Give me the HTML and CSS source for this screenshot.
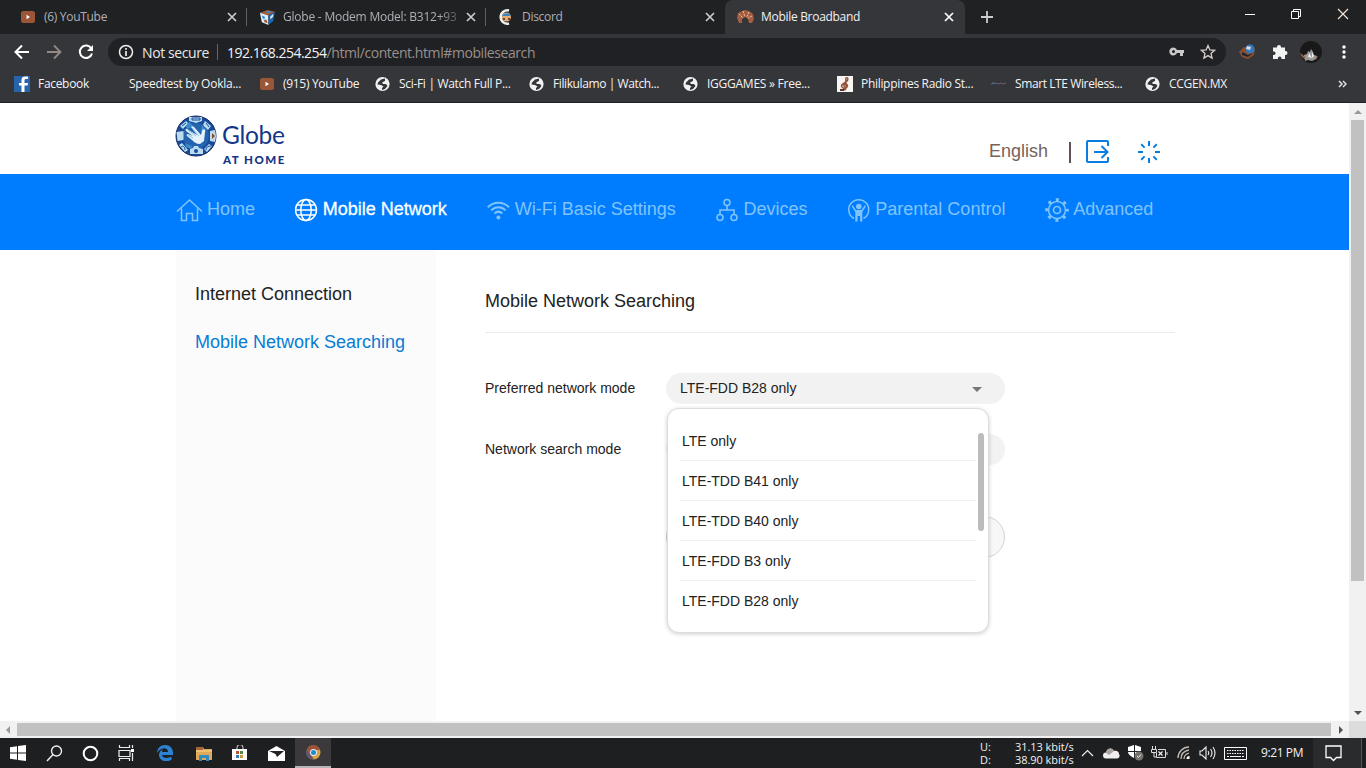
FILE: index.html
```html
<!DOCTYPE html>
<html lang="en">
<head>
    <meta charset="UTF-8">
    <meta name="viewport" content="width=device-width, initial-scale=1.0">
    <title>Mobile Broadband</title>
    <link rel="stylesheet" href="styles.css">
</head>
<body>
    <svg class="sprite" width="0" height="0">
        <symbol id="youtube" viewBox="0 0 16 16"><rect x="1" y="2" width="14" height="12" rx="2.500" fill="#9b5637"/><path d="M6.500 5.800v4.400L10 8z" fill="#fff"/></symbol>
        <symbol id="world" viewBox="0 0 16 16"><circle cx="7.500" cy="8" r="7.100" fill="#f1f1f1"/><path d="M10 2.500L6 3.500 3 6.500 2.500 8.500 6 9 8.500 10.500 7 12v2l3-1 2.500-3L11 8H8L7 6.500l3-1.500z" fill="#35363a"/><path d="M8.500 6.500L13 5.500" stroke="#f1f1f1"/></symbol>
        <symbol id="close" viewBox="0 0 10 10"><path d="M1 1l8 8M9 1L1 9" stroke="currentColor" stroke-width="1.700"/></symbol>
    </svg>
    <div class="tabs">
        <div class="tab">
            <svg width="16" height="16"><use href="#youtube"/></svg>
            <span class="tab-title">(6) YouTube</span>
            <svg class="x" width="10" height="10"><use href="#close"/></svg>
        </div>
        <div class="tab">
            <svg width="17" height="17" viewBox="0 0 18 18"><path d="M1 4l8-3 8 2-7 4z" fill="#a85b32"/><path d="M1 4l9 3v10l-7-3z" fill="#e1edf5"/><path d="M17 3l-7 4v10l5-4z" fill="#1c63b2"/><path d="M3 7l3 1v3l-2-1zM7 3l4-1 2 1-4 2z" fill="#318bd4"/><path d="M5 12l3-1 1 4-3-1z" fill="#a85b32"/><path d="M12 8l3-3v3l-3 3z" fill="#dceaf4"/></svg>
            <span class="tab-title fade">Globe - Modem Model: B312+93</span>
            <svg class="x" width="10" height="10"><use href="#close"/></svg>
        </div>
        <div class="tab">
            <svg width="16" height="16" viewBox="0 0 16 16"><path d="M11 1.500A6.700 6.700 0 1 0 11 14.500" fill="none" stroke="#eee" stroke-width="2.500"/><circle cx="8.500" cy="8" r="4.500" fill="#e5ae76"/><path d="M4 7a5 5 0 0 1 9 0z" fill="#3488c5"/><path d="M5 9h2v2H5zm5 0h2v2h-2z" fill="#754326"/></svg>
            <span class="tab-title">Discord</span>
            <svg class="x" width="10" height="10"><use href="#close"/></svg>
        </div>
        <div class="tab active">
            <svg width="17" height="16" viewBox="0 0 17 16"><path d="M5 14H2L0 9l1-5 4-2 3-1 4 1 4 3 1 5-2 4h-3l-1-4-3-2-3 2z" fill="#a65d40"/><path d="M2 5l4 4M6 2l2 6M12 3l-2 5M15 7l-4 2" stroke="#e7c3ad" stroke-width="1" stroke-dasharray="2 1"/></svg>
            <span class="tab-title">Mobile Broadband</span>
            <svg class="x" width="10" height="10"><use href="#close"/></svg>
        </div>
        <svg class="plus" width="12" height="12" viewBox="0 0 12 12"><path d="M6 0v12M0 6h12" stroke="#ccc" stroke-width="1.800"/></svg>
        <div class="window-buttons">
            <svg width="10" height="12"><path d="M0 6.500h10" stroke="#fff"/></svg>
            <svg width="12" height="12"><path d="M1.500 3.500h7v7h-7zM3.500 3V1.500h7v7H9" fill="none" stroke="#fff"/></svg>
            <svg width="12" height="12"><path d="M1 1l10 10M11 1L1 11" stroke="#f4e3d5" stroke-width="1.200"/></svg>
        </div>
    </div>
    <div class="toolbar">
        <svg width="16" height="16" viewBox="0 0 16 16"><path d="M15 8H2M8 1.500L1.500 8 8 14.500" fill="none" stroke="#fff" stroke-width="2"/></svg>
        <svg width="16" height="16" viewBox="0 0 16 16"><path d="M1 8h13M8 1.500L14.500 8 8 14.500" fill="none" stroke="#938a86" stroke-width="1.800"/></svg>
        <svg width="16" height="16" viewBox="0 0 16 16"><path d="M13.300 4.500A6.200 6.200 0 1 0 14 9.500" fill="none" stroke="#fff" stroke-width="2"/><path d="M15 1v6H9z" fill="#fff"/></svg>
        <div class="address">
            <svg width="16" height="16" viewBox="0 0 16 16"><circle cx="8" cy="8" r="6.500" fill="none" stroke="#eee" stroke-width="1.500"/><path d="M8 7v5M8 4v1.700" stroke="#eee" stroke-width="1.700"/></svg>
            <span class="secure">Not secure</span>
            <span class="bar"></span>
            <span class="url"><b>192.168.254.254</b>/html/content.html#mobilesearch</span>
            <svg class="key" width="15" height="10" viewBox="0 0 15 10"><path d="M8 3h7v3h-1v3h-3V6H8A4 4 0 1 1 8 3z" fill="#c9c9c9"/><circle cx="4.500" cy="4.500" r="1.500" fill="#202124"/></svg>
            <svg class="star" width="16" height="16" viewBox="0 0 16 16"><path d="M8 1.500l1.900 4.400 4.700.4-3.600 3.100 1.100 4.700L8 11.600l-4.100 2.500L5 9.400 1.400 6.300l4.700-.4z" fill="none" stroke="#d9cec6" stroke-width="1.300"/></svg>
        </div>
        <svg class="extension" width="17" height="16" viewBox="0 0 17 16"><path d="M0 8l5-5 11 2-1 6-6 4-6-2z" fill="#885030"/><circle cx="11" cy="5" r="4.500" fill="#3279bd"/><path d="M8 2l4 1-1 3-4-1z" fill="#d6dce0"/><path d="M3 8l6 3 5-2-5 4-6-2z" fill="#20242d"/></svg>
        <svg class="puzzle" width="16" height="16" viewBox="0 0 16 16"><path d="M1 3.500h4V3a2 2 0 0 1 4 0v.5h4V7h.5a2 2 0 0 1 0 4H13v4H9.500v-.7a1.800 1.800 0 0 0-3.600 0v.7H1v-4h.8a1.800 1.800 0 0 0 0-3.600H1z" fill="#f4f4f4"/></svg>
        <svg class="avatar" width="24" height="24" viewBox="0 0 24 24"><circle cx="12" cy="12" r="11" fill="#181818"/><path d="M5 15l3-1 1-3 2 1 1-3 2 3 1 3 3 1-1 3-4 2-4-1-3 1z" fill="#999"/><path d="M1 13l3 2 3 5-4-3zM16 18l3-2-2 4z" fill="#aa663e"/><path d="M10 13l3 5-4-1zM13 12l2 4-2 2z" fill="#eee"/></svg>
        <svg width="4" height="14"><circle cx="2" cy="2" r="1.700" fill="#fff"/><circle cx="2" cy="7" r="1.700" fill="#fff"/><circle cx="2" cy="12" r="1.700" fill="#fff"/></svg>
    </div>
    <div class="bookmarks">
        <div><svg width="16" height="16"><path fill="#2864ae" d="M0 0h16v16H0z"/><path d="M14 3h-2c-1 0-1.500.5-1.500 1.500V7H14l-.4 2.500h-3.100V16H7.500V9.500H5V7h2.500V4C7.500 1.500 9 .5 11 .5h3z" fill="#fff"/></svg><span>Facebook</span></div>
        <div><i class="no-icon"></i><span class="ookla">Speedtest by Ookla...</span></div>
        <div><svg width="16" height="16"><use href="#youtube"/></svg><span>(915) YouTube</span></div>
        <div><svg width="16" height="16"><use href="#world"/></svg><span>Sci-Fi | Watch Full P...</span></div>
        <div><svg width="16" height="16"><use href="#world"/></svg><span class="tight">Filikulamo | Watch...</span></div>
        <div><svg width="16" height="16"><use href="#world"/></svg><span class="ookla">IGGGAMES » Free...</span></div>
        <div><svg width="16" height="16"><path fill="#f7f5f3" d="M0 0h16v16H0z"/><path d="M7 14c4 0 1-9 2-12 2-1 3 2 0 4C5 8 3 10 6 12c4 1 6-3 3-4-2 0-3 2-1 3" fill="none" stroke="#93533b" stroke-width="1.500"/><path d="M3 13h4v2H3z" fill="#593628"/></svg><span>Philippines Radio St...</span></div>
        <div><svg width="16" height="16"><path d="M0 8l2-1 1 1 2-1 2 1 3-1 2 1 3-1" fill="none" stroke="#69636b"/><path d="M1 7h3" stroke="#437298"/></svg><span class="tight">Smart LTE Wireless...</span></div>
        <div><svg width="16" height="16"><use href="#world"/></svg><span>CCGEN.MX</span></div>
        <svg class="more" width="9" height="8"><path d="M1 1l3 3-3 3M5 1l3 3-3 3" fill="none" stroke="#ddd" stroke-width="1.500"/></svg>
    </div>

    <div class="view">
        <div class="page">
            <div class="header">
                <div class="logo">
                    <svg width="42" height="42" viewBox="0 0 42 42">
                        <circle cx="21" cy="21" r="20" fill="#184b9c" stroke="#172c62"/>
                        <circle cx="21" cy="21" r="13" fill="#2463ae"/>
                        <path d="M9 10l6-3 3 4-5 3zM27 10l4 5-2 7-3-6zM10 28l7 3-1 3-5-2z" fill="#3e8bcb"/>
                        <path d="M14 2h13v4l-6 2-7-2zM1.500 17l7-1v9l-6 1zM35 16l5-1 1 6-1 6-5-1zM15 34l3-1 1-2h4l1 2 4 1v5H15zM5 11l6-5 2 2-5 6zM30 6l6 5-3 4-5-5zM4 30l3-2 6 7-3 2zM29 34l5-5 3 2-5 6z" fill="#b9ddee"/>
                        <path d="M17 3h8v2h-8zM7 11l4-3M31 8l3 4M6 32c2-2 4 0 4 3M31 35c0-3 2-4 5-4" fill="none" stroke="#184b9c"/>
                        <circle cx="21" cy="36" r="2" fill="#1b4e9c"/><path d="M37 18v6l3-3z" fill="#8d452c"/>
                        <path d="M12 14l10 6-6-8c1-1 2-1 3 0l7 8 1-4c1-3 4-2 3 1l-1 9-4 3c-4 0-6-2-8-4l-5-4c-1-1 0-2 1-2l5 2-7-5c-1-1 0-3 1-2z" fill="#e3f3fb"/>
                        <path d="M13 15l8 6M17 13l7 8M13 20l5 3" stroke="#66acd8" stroke-width=".7"/>
                    </svg>
                    <div class="brand">
                        <div class="brand-name">Globe</div>
                        <div class="brand-sub">AT HOME</div>
                    </div>
                </div>
                <div class="tools">
                    <span class="language">English</span>
                    <span class="divider"></span>
                    <svg width="24" height="24" viewBox="0 0 24 24"><path d="M23 6V2q0-1-1-1H3q-1 0-1 1v19q0 1 1 1h19q1 0 1-1v-4M9 12h13M16.500 6l6 6-6 6" fill="none" stroke="#087cdf" stroke-width="2"/></svg>
                    <svg class="loading" width="24" height="24" viewBox="0 0 24 24"><path d="M12 1v5M12 18v5M1 12h5M18 12h5M4.200 4.200l3.400 3.400M16.400 16.400l3.400 3.400M4.200 19.800l3.400-3.400M16.400 7.600l3.400-3.400" stroke="#087cdf" stroke-width="2"/></svg>
                </div>
            </div>
            <div class="nav">
                <div class="nav-item">
                    <svg width="26" height="24" viewBox="0 0 26 24"><path d="M1 13.500L13.500 2 26 13.500M5.500 10.500v12h5v-7h6v7h5v-12" fill="none" stroke="currentColor" stroke-width="1.500"/></svg>
                    <span>Home</span>
                </div>
                <div class="nav-item selected">
                    <svg width="24" height="24" viewBox="0 0 24 24"><g fill="none" stroke="currentColor" stroke-width="1.500"><circle cx="11" cy="12" r="10.500"/><ellipse cx="11" cy="12" rx="5.200" ry="10.500"/><path d="M2 7h18M2 17h18M.500 12h21"/></g></svg>
                    <span>Mobile Network</span>
                </div>
                <div class="nav-item">
                    <svg width="24" height="24" viewBox="0 0 24 24"><path d="M.8 9.200c6-6 15.200-6 21.200 0M4.200 12.400c4.200-4.200 10.200-4.200 14.400 0M7.500 15.500c2.400-2.300 5.400-2.300 7.800 0" fill="none" stroke="currentColor" stroke-width="2"/><circle cx="11.400" cy="19.500" r="2" fill="currentColor"/></svg>
                    <span>Wi-Fi Basic Settings</span>
                </div>
                <div class="nav-item">
                    <svg width="24" height="24" viewBox="0 0 24 24"><g fill="none" stroke="currentColor" stroke-width="1.600"><circle cx="11" cy="4.500" r="3"/><circle cx="4" cy="19.500" r="3"/><circle cx="18" cy="19.500" r="3"/><path d="M11 7.500V12M4 16.500V12h14v4.500"/></g></svg>
                    <span>Devices</span>
                </div>
                <div class="nav-item">
                    <svg width="24" height="24" viewBox="0 0 24 24"><path d="M7 20.500A10 10 0 1 1 16.500 20.500" fill="none" stroke="currentColor" stroke-width="1.500"/><circle cx="11.800" cy="8.500" r="2.800" fill="currentColor"/><path d="M5.500 7L9 12h5.500L18 7l.8 1.500-3.500 5.500v9.500h-2.200V18h-2.600v5.500H8.300V14L4.800 8.500z" fill="currentColor"/></svg>
                    <span>Parental Control</span>
                </div>
                <div class="nav-item">
                    <svg width="24" height="24" viewBox="0 0 24 24"><g fill="none" stroke="currentColor"><circle cx="12" cy="12" r="10.300" stroke-width="3" stroke-dasharray="3 5.090" stroke-dashoffset="1.500"/><circle cx="12" cy="12" r="8.500" stroke-width="1.500"/><circle cx="12" cy="12" r="3.500" stroke-width="1.700"/></g></svg>
                    <span>Advanced</span>
                </div>
            </div>
            <div class="content">
                <div class="sidebar">
                    <div>Internet Connection</div>
                    <div class="current">Mobile Network Searching</div>
                </div>
                <div class="main">
                    <div class="page-title">Mobile Network Searching</div>
                    <div class="row">
                        <label>Preferred network mode</label>
                        <div class="select">
                            <span>LTE-FDD B28 only</span>
                            <i class="arrow"></i>
                            <div class="dropdown">
                                <div class="options">
                                    <div>LTE only</div>
                                    <div>LTE-TDD B41 only</div>
                                    <div>LTE-TDD B40 only</div>
                                    <div>LTE-FDD B3 only</div>
                                    <div>LTE-FDD B28 only</div>
                                </div>
                                <div class="thumb"></div>
                            </div>
                        </div>
                    </div>
                    <div class="row">
                        <label>Network search mode</label>
                        <div class="select"></div>
                    </div>
                    <div class="button"></div>
                </div>
            </div>
        </div>
        <div class="scroll-y"><i class="up"></i><div></div><i class="down"></i></div>
        <div class="scroll-x"><i class="left"></i><div></div><i class="right"></i></div>
        <div class="corner"></div>
    </div>

    <div class="taskbar">
        <div class="task"><svg width="16" height="16"><path d="M0 2.300l7-1v6.200H0zM8 1.100L16 0v7.500H8zM0 8.500h7v6.200l-7-1zM8 8.500h8V16l-8-1.100z" fill="#fff"/></svg></div>
        <div class="task"><svg width="17" height="17"><circle cx="10.500" cy="6" r="5" fill="none" stroke="#eee" stroke-width="1.400"/><path d="M7 9.500L1 16" stroke="#eee" stroke-width="1.500"/></svg></div>
        <div class="task"><svg width="17" height="17"><circle cx="8.500" cy="8.500" r="6.800" fill="none" stroke="#fff" stroke-width="2"/></svg></div>
        <div class="task"><svg width="17" height="16"><path d="M1.500 0v2.500h10V0M1 5.500h11v6H1zM1.500 16v-2.500h10V16M14.500 0v3M14.500 8v8" fill="none" stroke="#eee" stroke-width="1.200"/><path d="M13 4h3v3h-3z" fill="#fff"/></svg></div>
        <div class="task edge"><svg width="16" height="16"><path d="M0 8C.3 3 3.500 0 8 0c5 0 8 3.500 8 8v2H5c.4 3 5.500 4 9.500 1.500V15C8 18 2 15 2 10c0-3 2-5 4.500-6C5.300 5 5 6 5 7h6c0-5-7-5-11 1z" fill="#2d83d3"/></svg></div>
        <div class="task"><svg width="17" height="15"><path d="M0 1h7l1 2h8v11H0z" fill="#dca95a"/><path d="M0 1h7v3H0z" fill="#a56739"/><path d="M0 5h16" stroke="#ffd78a"/><path d="M3 15V9h10v6h-3v-3H6v3z" fill="#328ac3"/></svg></div>
        <div class="task"><svg width="16" height="16"><path d="M5 4V2.500a3 3 0 0 1 6 0V4" fill="none" stroke="#ddd"/><path d="M0 4h15v11H0z" fill="#fff"/><path d="M4 6h3v3H4z" fill="#b55834"/><path d="M8 6h3v3H8z" fill="#558c46"/><path d="M4 10h3v3H4z" fill="#2b7cb9"/><path d="M8 10h3v3H8z" fill="#d19a35"/></svg></div>
        <div class="task mail"><svg width="17" height="15"><path d="M0 5l8.500-5L17 5v10H0z" fill="#fff"/><path d="M1 5h15L9 11 7.500 8z" fill="#262324"/></svg></div>
        <div class="task running"><svg width="15" height="15"><circle cx="7.500" cy="7.500" r="7" fill="#d6a348"/><path d="M1 4a7 7 0 0 1 13 1H8l-3 4z" fill="#99543a"/><path d="M1 4l4 6 3 4.500A7 7 0 0 1 1 4z" fill="#65566a"/><circle cx="7.500" cy="7.500" r="3.500" fill="#e9edf0"/><circle cx="7.500" cy="7.500" r="2.500" fill="#218bd2"/></svg></div>
        <div class="tray">
            <div class="speed"><span>U:</span><span>31.13 kbit/s</span><span>D:</span><span>38.90 kbit/s</span></div>
            <svg width="13" height="8"><path d="M1 7l5.500-5.500L12 7" fill="none" stroke="#eee" stroke-width="1.200"/></svg>
            <svg class="cloud" width="17" height="11"><path d="M3 10.500a3 3 0 0 1 0-6C4 0 9-1 11 3c3-1 5 1 5 3 1.500 2 0 4.500-2 4.500z" fill="#f0f0f0"/><path d="M3 5c1-5 6-6 8-2L6 7z" fill="#aaa4a2"/></svg>
            <svg class="shield" width="16" height="16"><path d="M6 0L0 2v4h6zM7 0l6 2v4H7zM0 7h6v6C2 11 0 9 0 7zM7 7h6c0 3-2 5-6 6z" fill="#fff"/><circle cx="11" cy="11" r="4.500" fill="#77736f"/><path d="M9 11l1.500 1.500L13 9.500" fill="none" stroke="#eee"/></svg>
            <svg class="battery" width="17" height="14"><path d="M1.500 0v3M4.500 0v3M.5 3.500h5v3h-5zM3 7v4h2M7 3.500h7.500v8H5.500V7M16 6v3" fill="none" stroke="#ddd"/><path d="M7.500 5.500l4 4M11.500 5.500l-4 4" stroke="#eee" stroke-width="1.200"/></svg>
            <svg class="wireless" width="14" height="14"><path d="M1 12C1 6 6 1 12 1M4 13c0-5 3-8 8-9M7 13c0-3 2-5 5-6" fill="none" stroke="#c3b9b3" stroke-width="1.300"/><path d="M9.500 13a3 3 0 0 1 3-3v3z" fill="#fff"/></svg>
            <svg class="volume" width="17" height="14"><path d="M1 5h2l4-4v12L3 9H1zM9 5q1.500 2 0 4M11.500 3q3 4 0 8M14 1q4 6 0 12" fill="none" stroke="#eee" stroke-width="1.100"/></svg>
            <svg class="keyboard" width="23" height="13"><path d="M.5.5h22v12H.5z" fill="none" stroke="#fff"/><path d="M3 3.500h17M3 6.500h17" stroke="#fff" stroke-dasharray="1.500 1"/><path d="M3 9.500h2m1 0h11m1 0h2" stroke="#fff"/></svg>
            <span class="clock">9:21 PM</span>
            <div class="notice"><svg width="17" height="17"><path d="M1 1h15v11.500h-4.500l-3 3-3-3H1z" fill="none" stroke="#fff" stroke-width="1.300"/></svg></div>
        </div>
    </div>
</body>
</html>
```
FILE: styles.css
```css
* {
    box-sizing: border-box;
}
body {
    margin: 0;
    width: 1366px;
    height: 768px;
    overflow: hidden;
    background: #fff;
    font-family: "Open Sans", "Noto Sans", sans-serif;
    font-size: 12px;
    white-space: nowrap;
}
svg {
    display: block;
    flex: none;
}
.sprite {
    position: absolute;
}

/* browser */
.tabs {
    height: 34px;
    background: #202122;
    display: flex;
    align-items: center;
    padding-left: 8px;
}
.tab {
    width: 239px;
    height: 34px;
    display: flex;
    align-items: center;
    padding: 0 10px 0 12px;
    gap: 7px;
    color: #aeb0b8;
    background: linear-gradient(#606166, #606166) right center / 1px 18px no-repeat;
}
.tab:first-child {
    gap: 8px;
}
.tab:nth-child(3) {
    background: none;
    gap: 8px;
}
.tab-title {
    flex: 1;
    letter-spacing: -0.3px;
    padding-bottom: 1px;
}
.x {
    color: #ccc;
}
.fade {
    letter-spacing: -0.22px;
    -webkit-mask-image: linear-gradient(90deg, #000 88%, rgba(0, 0, 0, 0.3));
    mask-image: linear-gradient(90deg, #000 88%, rgba(0, 0, 0, 0.3));
}
.active {
    width: 240px;
    padding-right: 11px;
    background: #35363a;
    border-radius: 8px 8px 0 0;
    color: #f1f1f3;
}
.active .tab-title {
    letter-spacing: -0.3px;
}
.active .x {
    color: #fff;
}
.plus {
    margin-left: 16px;
}
.window-buttons {
    margin-left: auto;
    padding: 0 17px 6px 0;
    display: flex;
    gap: 35px;
}
.toolbar {
    height: 36px;
    background: #35363a;
    display: flex;
    align-items: center;
    padding: 0 20px 0 14px;
    gap: 16px;
}
.address {
    flex: none;
    width: 1118px;
    height: 28px;
    border-radius: 14px;
    background: #202124;
    display: flex;
    align-items: center;
    padding: 0 10px;
    font-size: 14px;
    color: #e8e8e8;
    margin: 0 -2px;
}
.secure {
    margin-left: 8px;
    width: 75px;
    letter-spacing: -0.4px;
}
.bar {
    width: 1px;
    height: 16px;
    background: #686468;
    margin-right: 9px;
}
.url {
    color: #99908d;
    letter-spacing: -0.42px;
}
.url b {
    color: #f3f3f3;
    font-weight: normal;
    letter-spacing: -0.5px;
}
.key {
    margin-left: auto;
}
.star {
    margin-left: 16px;
}
.extension {
    margin: 0 0 0 -1px;
}
.puzzle {
    margin: 0 -5px 0 0;
}
.avatar {
    margin-right: 3px;
}
.bookmarks {
    height: 33px;
    background: #35363a;
    border-bottom: 1px solid #202124;
    color: #f4f4f4;
    display: grid;
    grid-template-columns: 91px 154px 116px 154px 154px 154px 154px 154px 180px 20px;
    padding: 0 0 4px 14px;
    align-items: center;
}
.bookmarks div {
    display: flex;
    align-items: center;
    gap: 8px;
    letter-spacing: -0.31px;
}
.bookmarks span {
    padding-bottom: 1px;
}
.bookmarks .ookla {
    letter-spacing: -0.25px;
}
.bookmarks .tight {
    letter-spacing: -0.4px;
}
.no-icon {
    width: 16px;
}
.more {
    margin-left: 13px;
}

/* viewport */
.view {
    height: 635px;
    display: grid;
    grid-template-columns: 1349px 17px;
    grid-template-rows: 618px 17px;
}
.page {
    font-family: "Liberation Sans", Arial, sans-serif;
    font-size: 18px;
    color: #222;
    overflow: hidden;
}
.header {
    height: 71px;
    padding: 12px 188px 0 175px;
    display: flex;
    justify-content: space-between;
}
.logo {
    display: flex;
    gap: 5px;
    color: #143688;
    font-family: Lato, sans-serif;
}
.brand-name {
    font-size: 24.5px;
    line-height: 28px;
    margin-top: 6px;
    letter-spacing: -0.3px;
}
.brand-sub {
    font-size: 11.5px;
    line-height: 14px;
    margin: 4px 0 0 1px;
    font-weight: 900;
    letter-spacing: 1.5px;
}
.tools {
    display: flex;
    align-items: center;
    height: 48px;
    margin-top: 13px;
    color: #76625b;
}
.language {
    width: 80px;
    padding-bottom: 2px;
}
.divider {
    width: 2px;
    height: 21px;
    background: #5e5353;
    margin-right: 14px;
}
.loading {
    margin-left: 28px;
}
.nav {
    height: 76px;
    background: #007dff;
    color: #80c4fb;
    display: flex;
    padding: 24px 0 0 176px;
    gap: 39.8px;
}
.nav-item {
    height: 24px;
    display: flex;
    align-items: center;
    gap: 4px;
}
.nav-item span {
    padding-bottom: 2px;
}
.nav-item:first-child {
    gap: 5px;
}
.selected {
    color: #fff;
    -webkit-text-stroke: 0.3px #fff;
}
.content {
    height: 471px;
    display: flex;
    padding-left: 176px;
}
.sidebar {
    width: 260px;
    background: #fbfbfb;
    padding: 20px 0 0 19px;
    line-height: 48px;
}
.current {
    color: #087cd5;
}
.main {
    width: 690px;
    margin-left: 49px;
    font-size: 14px;
}
.page-title {
    height: 83px;
    border-bottom: 1px solid #ebebeb;
    font-size: 18px;
    line-height: 102px;
    margin-bottom: 40px;
}
.row {
    display: flex;
    align-items: center;
    height: 31px;
    margin-bottom: 30px;
}
label {
    width: 181px;
    padding-bottom: 2px;
}
.select {
    position: relative;
    width: 339px;
    height: 31px;
    border-radius: 16px;
    background: #f2f2f2;
    padding: 0 23px 1px 14px;
    display: flex;
    align-items: center;
    justify-content: space-between;
}
.arrow {
    border: 5px solid transparent;
    border-top-color: #777;
    border-bottom: 0;
    margin-top: 2px;
}
.dropdown {
    position: absolute;
    z-index: 1;
    left: 1px;
    top: 35px;
    width: 322px;
    height: 225px;
    border: 1px solid #ddd;
    border-radius: 12px;
    background: #fff;
    box-shadow: 0 1px 4px rgba(0, 0, 0, 0.2);
    padding: 12px 4px 0 12px;
    display: flex;
    gap: 2px;
}
.options {
    width: 296px;
}
.options div {
    height: 40px;
    line-height: 41px;
    padding-left: 2px;
    border-bottom: 1px solid #f1f1f1;
}
.options div:last-child {
    border-bottom: 0;
}
.thumb {
    flex: none;
    width: 6px;
    height: 98px;
    border-radius: 3px;
    background: #bcbcbc;
    margin-top: 12px;
}
.button {
    width: 339px;
    height: 42px;
    margin: 51px 0 0 181px;
    border: 1px solid #d2d4d4;
    border-radius: 21px;
    background: #f7f7f7;
}
.scroll-y,
.scroll-x {
    background: #f1f1f1;
    display: flex;
    align-items: center;
    justify-content: space-between;
}
.scroll-y {
    flex-direction: column;
    padding: 7px 0 6px;
}
.scroll-y div {
    width: 13px;
    height: 461px;
    background: #c1c1c1;
    margin: 6px 0 auto;
}
.scroll-x {
    padding: 0 6px;
}
.scroll-x div {
    width: 1314px;
    height: 13px;
    background: #c1c1c1;
    margin: 0 auto 0 7px;
}
.up {
    border: 4px solid transparent;
    border-bottom-color: #999;
    border-top: 0;
}
.down {
    border: 4px solid transparent;
    border-top-color: #505050;
    border-bottom: 0;
}
.left {
    border: 4px solid transparent;
    border-right-color: #999;
    border-left: 0;
}
.right {
    border: 4px solid transparent;
    border-left-color: #505050;
    border-right: 0;
}
.corner {
    background: #dcdcdc;
}

/* taskbar */
.taskbar {
    height: 30px;
    background: #1d1f20;
    color: #f2f2f2;
    display: flex;
}
.task {
    width: 36px;
    display: flex;
    align-items: center;
    justify-content: center;
}
.task.edge {
    width: 42px;
}
.task.mail {
    width: 37px;
}
.task.running {
    background: #3b393b;
    border-bottom: 2px solid #b5b5b5;
}
.tray {
    margin-left: auto;
    display: flex;
    align-items: center;
}
.speed {
    display: grid;
    grid-template-columns: 35px 66px;
    line-height: 13px;
    font-size: 11px;
    letter-spacing: -0.05px;
}
.cloud {
    margin-left: 9px;
}
.shield {
    margin-left: 8px;
}
.battery {
    margin-left: 7px;
}
.wireless {
    margin-left: 9px;
}
.volume {
    margin-left: 8px;
}
.keyboard {
    margin-left: 8px;
}
.clock {
    margin-left: 14px;
    width: 52px;
    padding-bottom: 1px;
    letter-spacing: -0.4px;
}
.notice {
    width: 49px;
    height: 30px;
    padding-left: 12px;
    background: #292b2c;
    border-right: 1px solid #555;
    margin-right: 4px;
    display: flex;
    align-items: center;
}
```
